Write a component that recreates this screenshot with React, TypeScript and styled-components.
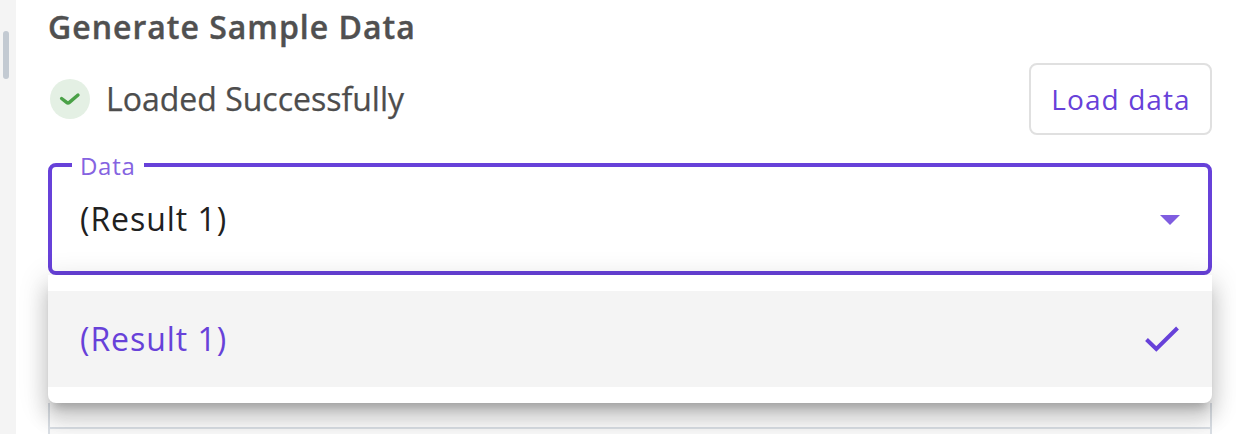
import React from "react";
import styled, { createGlobalStyle } from "styled-components";

const purple = "#6741d9";

const GlobalStyle = createGlobalStyle`
  * { box-sizing: border-box; }
  body { margin: 0; background: #fff; overflow: hidden; font-family: "Open Sans", "Noto Sans", sans-serif; }
`;

const Page = styled.div`
  display: flex;
  height: 434px;
  overflow: hidden;
`;

const Gutter = styled.aside`
  flex: 0 0 16px;
  padding: 31px 0 0 3px;
  background: #f4f4f4;
`;

const ResizeHandle = styled.div`
  width: 6px;
  height: 48px;
  border-radius: 3px;
  background: #c3cad2;
`;

const Panel = styled.main`
  flex: 1;
  display: flex;
  flex-direction: column;
  padding: 0 24px 0 32px;
`;

const Title = styled.h2`
  margin: 0;
  height: 63px;
  padding-top: 5px;
  font-size: 32px;
  line-height: 44px;
  font-weight: 600;
  letter-spacing: 1px;
  color: #505050;
  -webkit-text-stroke: 0.4px currentColor;
  white-space: nowrap;
`;

const StatusRow = styled.div`
  display: flex;
  align-items: center;
  justify-content: space-between;
  height: 72px;
  margin-bottom: 28px;
`;

const Status = styled.div`
  display: flex;
  align-items: center;
  gap: 16px;
  padding-left: 2px;
`;

const StatusText = styled.span`
  font-size: 32px;
  line-height: 44px;
  letter-spacing: 0;
  color: #4d4d4d;
  -webkit-text-stroke: 0.25px currentColor;
  white-space: nowrap;
`;

const SuccessBadge = styled.span`
  display: flex;
  width: 40px;
  height: 40px;
  border-radius: 50%;
  background: #e4f0e4;
`;

const LoadButton = styled.button`
  width: 183px;
  height: 72px;
  padding: 0 0 0 1px;
  border: 2px solid #e0e0e0;
  border-radius: 8px;
  background: #fff;
  color: ${purple};
  font: 400 28px/40px "Open Sans", "Noto Sans", sans-serif;
  letter-spacing: 1.1px;
  white-space: nowrap;
`;

const Select = styled.div`
  position: relative;
  display: flex;
  align-items: center;
  justify-content: space-between;
  flex: 0 0 112px;
  padding: 0 28px;
  border: 4px solid ${purple};
  border-radius: 8px;
`;

const FloatingLabel = styled.label`
  position: absolute;
  left: 20px;
  top: -17px;
  width: 72px;
  padding-left: 8px;
  background: #fff;
  color: #8563e1;
  font-size: 24px;
  line-height: 32px;
  letter-spacing: 0.7px;
`;

const Value = styled.span<{ $selected?: boolean }>`
  font-size: 32px;
  line-height: 44px;
  letter-spacing: 0.95px;
  color: ${(p) => (p.$selected ? purple : "#212121")};
  white-space: nowrap;
`;

const Arrow = styled.svg`
  margin-top: 2px;
`;

const Menu = styled.div`
  position: relative;
  z-index: 1;
  flex: 0 0 128px;
  padding: 16px 0;
  border-radius: 0 0 8px 8px;
  background: #fff;
  box-shadow: 0 10px 10px -6px rgba(0, 0, 0, 0.2), 0 16px 20px 2px rgba(0, 0, 0, 0.14),
    0 6px 28px 4px rgba(0, 0, 0, 0.12);
`;

const Option = styled.div`
  display: flex;
  align-items: center;
  justify-content: space-between;
  height: 96px;
  padding: 0 32px;
  background: #f4f4f4;
`;

const TableEdge = styled.div`
  flex: 0 0 26px;
  border: 2px solid #dadfe5;
  border-top: 0;
`;

const TableBody = styled.div`
  flex: 1;
  border: 2px solid #dadfe5;
  border-width: 0 2px;
  background: #fafafa;
`;

export default function App() {
  return (
    <Page>
      <GlobalStyle />
      <Gutter>
        <ResizeHandle />
      </Gutter>
      <Panel>
        <Title>Generate Sample Data</Title>
        <StatusRow>
          <Status>
            <SuccessBadge>
              <svg width="40" height="40" viewBox="0 0 40 40" fill="none">
                <path d="M11.6 19.5L16.6 23.4Q18 24.6 19.4 23.4L28 16" stroke="#4aa147" strokeWidth="3.4" strokeLinecap="round" />
              </svg>
            </SuccessBadge>
            <StatusText>Loaded Successfully</StatusText>
          </Status>
          <LoadButton>Load data</LoadButton>
        </StatusRow>
        <Select>
          <FloatingLabel>Data</FloatingLabel>
          <Value>(Result 1)</Value>
          <Arrow width="20" height="10" viewBox="0 0 20 10">
            <path d="M0 0H20L10 10Z" fill="#7f5de0" />
          </Arrow>
        </Select>
        <Menu>
          <Option>
            <Value $selected>(Result 1)</Value>
            <svg width="36" height="28" viewBox="0 0 36 28" fill="none">
              <path d="M2.5 14.5L12.3 24L33.5 3" stroke={purple} strokeWidth="4" />
            </svg>
          </Option>
        </Menu>
        <TableEdge />
        <TableBody />
      </Panel>
    </Page>
  );
}
